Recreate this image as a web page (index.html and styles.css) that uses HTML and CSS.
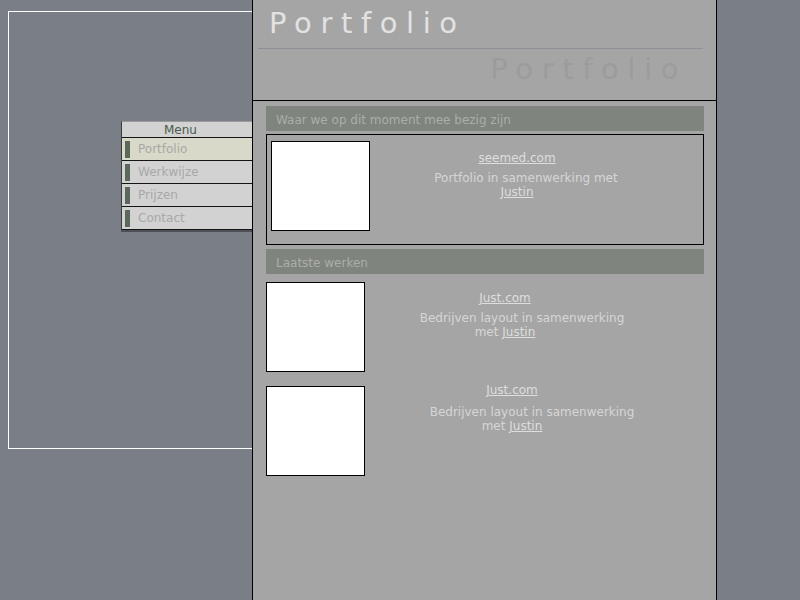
FILE: index.html
```html
<!DOCTYPE html>
<html lang="nl">
<head>
    <meta charset="UTF-8">
    <title>Portfolio</title>
    <link rel="stylesheet" href="styles.css">
</head>
<body>

    <div class="page">
        <div class="side">
            <div class="frame">
                <div class="menu">
                    <div class="menu-head">Menu</div>
                    <a class="menu-item active" href="#"><span class="bar"></span>Portfolio</a>
                    <a class="menu-item" href="#"><span class="bar"></span>Werkwijze</a>
                    <a class="menu-item" href="#"><span class="bar"></span>Prijzen</a>
                    <a class="menu-item" href="#"><span class="bar"></span>Contact</a>
                </div>
            </div>
        </div>

        <div class="main">
            <div class="header">
                <h1 class="title">Portfolio</h1>
                <hr class="rule">
                <div class="title-shadow">Portfolio</div>
            </div>

            <div class="content">
                <h2 class="section-head">Waar we op dit moment mee bezig zijn</h2>
                <div class="work current">
                    <div class="thumb"></div>
                    <div class="info">
                        <a class="work-title" href="#">seemed.com</a>
                        <p class="desc">Portfolio in samenwerking met <a href="#">Justin</a></p>
                    </div>
                </div>

                <h2 class="section-head">Laatste werken</h2>
                <div class="work">
                    <div class="thumb"></div>
                    <div class="info">
                        <a class="work-title" href="#">Just.com</a>
                        <p class="desc">Bedrijven layout in samenwerking met <a href="#">Justin</a></p>
                    </div>
                </div>
                <div class="work alt">
                    <div class="thumb"></div>
                    <div class="info">
                        <a class="work-title" href="#">Just.com</a>
                        <p class="desc">Bedrijven layout in samenwerking met <a href="#">Justin</a></p>
                    </div>
                </div>
            </div>
        </div>
    </div>

</body>
</html>
```

FILE: styles.css
```css
body {
    margin: 0;
    background-color: #7a7e86;
    font-family: "DejaVu Sans", Verdana, sans-serif;
    font-size: 12px;
    overflow: hidden;
}
.page {
    display: flex;
}
.side {
    width: 252px;
    flex-shrink: 0;
}
.frame {
    box-sizing: border-box;
    width: 244px;
    height: 438px;
    margin: 11px 0 0 8px;
    border: 1px solid #ffffff;
    border-right: none;
}
.menu {
    box-sizing: border-box;
    width: 131px;
    margin: 109px 0 0 112px;
    background: #d2d2d2;
    border-top: 1px solid #9a9a9a;
    border-left: 1px solid #3c3c3c;
    box-shadow: 0 2px 0 #4e5058;
}
.menu-head {
    height: 15px;
    line-height: 16px;
    padding-right: 13px;
    text-align: center;
    color: #4a5a4e;
}
.menu-item {
    display: flex;
    align-items: center;
    height: 22px;
    border-top: 1px solid #141414;
    color: #a8a8a8;
    text-decoration: none;
}
.menu-item:last-child {
    border-bottom: 1px solid #141414;
}
.menu-item.active {
    background: #d9d9c9;
}
.bar {
    width: 5px;
    height: 17px;
    margin: 0 8px 0 3px;
    background: #5a685c;
}
.main {
    box-sizing: border-box;
    width: 465px;
    min-height: 600px;
    background: #a5a5a5;
    border-left: 1px solid #000;
    border-right: 1px solid #000;
}
.header {
    height: 100px;
    border-bottom: 1px solid #000;
}
.title {
    margin: 0;
    padding: 6px 0 0 16px;
    height: 39px;
    font-size: 29px;
    font-weight: normal;
    letter-spacing: 8.6px;
    color: #e2e2e2;
}
.rule {
    margin: 3px 13px 0 5px;
    border: none;
    border-top: 1px solid #8e9098;
}
.title-shadow {
    padding: 3px 29px 0 0;
    text-align: right;
    font-size: 29px;
    letter-spacing: 8.6px;
    color: #9c9c9c;
}
.content {
    padding: 5px 12px 0 13px;
}
.section-head {
    margin: 0;
    height: 25px;
    line-height: 28px;
    padding-left: 10px;
    background: #7f847f;
    color: #abaea9;
    font-size: 12px;
    font-weight: normal;
}
.section-head + .work {
    margin-top: 8px;
}
.work {
    display: flex;
    margin-bottom: 14px;
}
.work.current {
    margin: 3px 0 4px;
    height: 111px;
    box-sizing: border-box;
    border: 1px solid #000;
    padding: 6px 4px;
}
.thumb {
    box-sizing: border-box;
    width: 99px;
    height: 90px;
    background: #fff;
    border: 1px solid #000;
    flex-shrink: 0;
}
.info {
    width: 220px;
    margin-left: 37px;
    padding-top: 10px;
    text-align: center;
    color: #d6d6d6;
}
.work:not(.current) .info {
    width: 240px;
    margin-left: 20px;
    padding-top: 9px;
}
.work.alt .info {
    width: 250px;
    margin-left: 22px;
    margin-top: -3px;
    padding-top: 0;
}
.work-title {
    display: block;
    line-height: 15px;
    margin-bottom: 5px;
}
.work.alt .work-title {
    margin-bottom: 7px;
}
.info a {
    color: #dedede;
}
.desc {
    margin: 0;
    line-height: 14px;
    text-indent: 18px;
}
.work:not(.current) .desc {
    text-indent: 34px;
}
.work.alt .desc {
    text-indent: 40px;
}
```
